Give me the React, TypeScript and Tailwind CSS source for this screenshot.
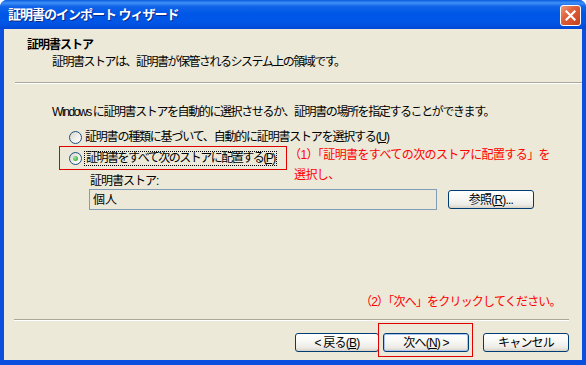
import clsx from 'clsx';
import type { ReactNode } from 'react';

const Radio = ({ checked }: { checked?: boolean }) => (
  <span className="flex h-[13px] w-[13px] shrink-0 items-center justify-center rounded-full border border-[#1C5180] bg-[linear-gradient(135deg,#D8D5CB_0%,#F3F2EE_60%,#FFFFFF_100%)]">
    {checked && (
      <span className="h-[5px] w-[5px] rounded-full bg-[radial-gradient(circle_at_35%_35%,#9BE89B,#1E9E1E)]" />
    )}
  </span>
);

const XpButton = ({
  children,
  className,
  isDefault,
}: {
  children: ReactNode;
  className?: string;
  isDefault?: boolean;
}) => (
  <button
    type="button"
    className={clsx(
      'flex h-[19px] items-center justify-center rounded-[3px] border border-[#003C74] bg-[linear-gradient(to_bottom,#FFFFFF_0%,#F7F7F4_45%,#ECEBE6_80%,#D8D2C6_100%)] text-[12px] leading-[16px] tracking-[-0.8px] text-black',
      isDefault && 'shadow-[inset_0_0_0_1px_#A9C4F3]',
      className,
    )}
  >
    {children}
  </button>
);

export default function App() {
  return (
    <div className="flex h-[365px] w-[586px] flex-col overflow-hidden rounded-t-[7px] bg-[#0B4FDF] font-['Liberation_Sans','Noto_Sans_CJK_JP',sans-serif] text-[12px] text-black">
      {/* title bar */}
      <div className="flex h-[29px] shrink-0 items-start justify-between bg-[linear-gradient(to_bottom,#0A5CE0_0%,#3E90F6_10%,#1264E8_22%,#0058E8_45%,#0055E5_80%,#0047D4_100%)] pl-[8px] pr-[5px]">
        <div className="pt-[6px] text-[13px] font-bold leading-[18px] tracking-[-1px] text-white [text-shadow:1px_1px_0_#0A2A8A]">
          証明書のインポート ウィザード
        </div>
        <div className="mt-[5px] flex h-[21px] w-[21px] items-center justify-center rounded-[3px] border border-white bg-[linear-gradient(135deg,#EE9A7C_0%,#E0603A_40%,#C4401C_100%)]">
          <svg width="11" height="11" viewBox="0 0 11 11">
            <path d="M1.5 1.5 L9.5 9.5 M9.5 1.5 L1.5 9.5" stroke="white" strokeWidth="2.2" strokeLinecap="square" />
          </svg>
        </div>
      </div>

      {/* body */}
      <div className="relative mx-[4px] mb-[5px] flex flex-1 flex-col bg-[#ECE9D8]">
        <div className="pl-[23px] pt-[8px]">
          <div className="h-[16px] font-bold leading-[16px] tracking-[-1px]">証明書ストア</div>
          <div className="mt-[1px] h-[16px] pl-[25px] leading-[16px] tracking-[-1.5px]">
            証明書ストアは、証明書が保管されるシステム上の領域です。
          </div>
        </div>
        <div className="ml-[11px] mt-[12px] h-[2px] border-t border-b border-t-[#ACA899] border-b-white" />

        <div className="mt-[20px] h-[16px] pl-[48px] leading-[16px] tracking-[-1.4px]">
          Windows に証明書ストアを自動的に選択させるか、証明書の場所を指定することができます。
        </div>

        <div className="ml-[65px] mt-[9px] flex h-[16px] items-center gap-[3px]">
          <Radio />
          <span className="leading-[16px] tracking-[-1.2px]">
            証明書の種類に基づいて、自動的に証明書ストアを選択する(<span className="underline">U</span>)
          </span>
        </div>

        <div className="ml-[55px] mt-[1px] flex h-[24px] w-[228px] items-center gap-[2px] border border-[#E00000] pl-[9px]">
          <Radio checked />
          <span className="border border-dotted border-black px-[1px] leading-[13px] tracking-[-1.5px]">
            証明書をすべて次のストアに配置する(<span className="underline">P</span>)
          </span>
        </div>

        <div className="ml-[86px] mt-[3px] h-[16px] leading-[16px] tracking-[-1px]">証明書ストア:</div>
        <div className="flex items-start">
          <div className="ml-[85px] flex h-[21px] w-[348px] items-center border border-[#7F9DB9] pl-[3px] leading-[16px]">
            個人
          </div>
          <XpButton className="ml-[11px] mt-[1px] w-[86px]">
            参照(<span className="underline">R</span>)...
          </XpButton>
        </div>

        {/* annotation (1) */}
        <div className="absolute left-[290px] top-[116px] text-[12px] leading-[20px] tracking-[-0.6px] text-[#FF0000]">
          <div className="-ml-[5px]">（1）「証明書をすべての次のストアに配置する」を</div>
          <div>選択し、</div>
        </div>

        <div className="flex-1" />

        <div className="h-[16px] pl-[356px] leading-[16px] tracking-[-0.8px] text-[#FF0000]">
          （2）「次へ」をクリックしてください。
        </div>
        <div className="ml-[10px] mr-[13px] mt-[9px] h-[2px] border-t border-b border-t-[#ACA899] border-b-white" />

        <div className="mb-[8px] mt-[12px] flex justify-end pr-[13px]">
          <XpButton className="w-[84px]">
            &lt;&nbsp;戻る(<span className="underline">B</span>)
          </XpButton>
          <div className="relative ml-[4px]">
            <XpButton isDefault className="w-[86px]">
              次へ(<span className="underline">N</span>)&nbsp;&gt;
            </XpButton>
            <div className="absolute -left-[5px] -top-[10px] h-[34px] w-[95px] border border-[#E00000]" />
          </div>
          <XpButton className="ml-[14px] w-[86px]">キャンセル</XpButton>
        </div>
      </div>
    </div>
  );
}
